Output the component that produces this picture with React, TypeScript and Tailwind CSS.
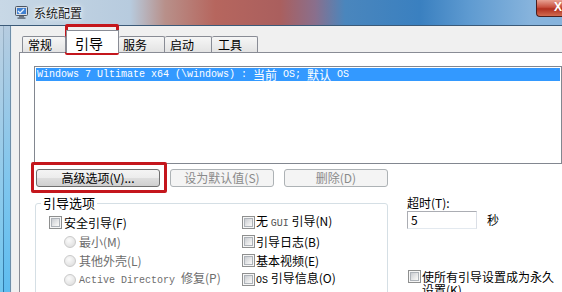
import React from "react";

function Checkbox() {
  return (
    <span className="inline-flex w-[13px] h-[13px] shrink-0 border border-[#8e8f8f] bg-[#f6f6f6] p-[1px]">
      <span className="flex-1 border border-[#aeb3b9] bg-[linear-gradient(135deg,#c9ccd1,#eeeeee_70%,#fafafa)]" />
    </span>
  );
}

function Radio() {
  return (
    <span className="inline-block w-[12px] h-[12px] shrink-0 rounded-full border border-[#cacaca] bg-[radial-gradient(circle_at_40%_35%,#fbfbfb,#e3e3e3_70%,#d8d8d8)]" />
  );
}

const mono = "font-['Liberation_Mono',monospace]";

export default function App() {
  return (
    <div className="relative w-[562px] h-[292px] overflow-hidden flex flex-col font-['Noto_Sans_CJK_SC',sans-serif] text-[12px] text-black">
      {/* Title bar */}
      <div className="h-[25px] shrink-0 flex items-center bg-[linear-gradient(90deg,#c8d8e6_0px,#b7cbde_130px,#b8908a_165px,#b6665e_215px,#aa5f5e_280px,#8a6f8c_315px,#4a86bd_345px,#3a80c0_420px,#5f9bd1_470px,#86b3dc_530px)]">
        <div className="ml-[15px] w-[13px] h-[13px] flex items-center justify-center">
          <svg width="13" height="13" viewBox="0 0 13 13">
            <rect x="0.5" y="0.5" width="12" height="9" rx="1" fill="#d9dde2" stroke="#4b5563" />
            <rect x="2" y="2" width="9" height="6" fill="#3f7fd0" />
            <path d="M3 5l2 2 4-4" stroke="#e8f3ff" strokeWidth="1.3" fill="none" />
            <rect x="4" y="10" width="5" height="1.5" fill="#6b7280" />
            <rect x="2.5" y="11.5" width="8" height="1.2" fill="#4b5563" />
          </svg>
        </div>
        <span className="ml-[6px] text-[12px] leading-[14px] text-[#1a1a1a] [text-shadow:0_0_6px_#fff,0_0_3px_#fff]">系统配置</span>
        <div className="ml-auto self-start w-[26px] h-[17px] rounded-bl-[4px] border border-t-0 border-r-0 border-[#4a1e1e] bg-[linear-gradient(#e8a193,#c7503f_45%,#b02f1f_55%,#d26b4f)] pl-[17px] text-white font-bold text-[12px] leading-[15px] font-['Liberation_Sans',sans-serif]">
          X
        </div>
      </div>
      <div className="h-px shrink-0 bg-[#3b5a78]" />

      {/* Body */}
      <div className="flex flex-1 min-h-0">
        {/* left frame */}
        <div className="w-[12px] shrink-0 flex">
          <div className="w-[3px] bg-[linear-gradient(#bcd0e2,#8fcbec_60%,#6fc6f0)]" />
          <div className="w-px bg-[linear-gradient(#9bb2c6,#2e78a8)]" />
          <div className="w-[6px] bg-[linear-gradient(#b6cce0,#7ec6ee_60%,#5ebdf0)]" />
          <div className="w-px bg-[#6f8ea8]" />
          <div className="w-px bg-[#e6edf2]" />
        </div>

        {/* content */}
        <div className="flex-1 bg-[#f0f0f0] flex flex-col pl-[7px] pt-[4px]">
          {/* tabs */}
          <div className="h-[22px] shrink-0 flex items-end pl-[3px] relative z-10">
            <div className="w-[44px] h-[16px] border border-b-0 border-[#898c95] rounded-t-[2px] bg-[linear-gradient(#f6f6f6,#e3e3e3)] pl-[5px] text-[12px] leading-[15px]">常规</div>
            <div className="w-[53px] h-[23px] -mb-px border border-b-0 border-[#898c95] bg-white pl-[8px] pt-[4px] text-[14px] leading-[16px]">引导</div>
            <div className="w-[46px] h-[16px] border border-b-0 border-l-0 border-[#898c95] rounded-t-[2px] bg-[linear-gradient(#f6f6f6,#e3e3e3)] pl-[4px] text-[12px] leading-[15px]">服务</div>
            <div className="w-[47px] h-[16px] border border-b-0 border-l-0 border-[#898c95] rounded-t-[2px] bg-[linear-gradient(#f6f6f6,#e3e3e3)] pl-[5px] text-[12px] leading-[15px]">启动</div>
            <div className="w-[46px] h-[16px] border border-b-0 border-l-0 border-[#898c95] rounded-t-[2px] bg-[linear-gradient(#f6f6f6,#e3e3e3)] pl-[6px] text-[12px] leading-[15px]">工具</div>
          </div>

          {/* panel */}
          <div className="flex-1 border-l border-t border-[#898c95] bg-white pl-[14px] pt-[13px] flex flex-col">
            {/* listbox */}
            <div className="w-[528px] h-[98px] shrink-0 border border-[#828790] p-px bg-white">
              <div className="h-[13px] bg-[#3399ff] text-white flex items-center pl-px whitespace-pre">
                <span className={`${mono} text-[10px] leading-[13px]`}>Windows 7 Ultimate x64 (\windows) : </span>
                <span className="text-[12px] leading-[13px]">当前</span>
                <span className={`${mono} text-[10px] leading-[13px]`}> OS; </span>
                <span className="text-[12px] leading-[13px]">默认</span>
                <span className={`${mono} text-[10px] leading-[13px]`}> OS</span>
              </div>
            </div>

            {/* buttons */}
            <div className="mt-[5px] ml-[2px] flex gap-[10px] shrink-0">
              <div className="w-[124px] h-[18px] rounded-[3px] border border-[#707070] bg-[linear-gradient(#f4f4f4_0%,#ececec_50%,#dedede_50%,#cfcfcf_100%)] flex items-center justify-center text-[12px] leading-[14px]">
                高级选项(V)...
              </div>
              <div className="w-[104px] h-[18px] rounded-[3px] border border-[#adb2b5] bg-[#f4f4f4] flex items-center justify-center text-[12px] leading-[14px] text-[#8a8a8a]">
                设为默认值(S)
              </div>
              <div className="w-[104px] h-[18px] rounded-[3px] border border-[#adb2b5] bg-[#f4f4f4] flex items-center justify-center text-[12px] leading-[14px] text-[#8a8a8a]">
                删除(D)
              </div>
            </div>

            {/* options row */}
            <div className="mt-[9px] flex shrink-0">
              <fieldset className="ml-px w-[353px] h-[120px] border border-[#d5dfe5] rounded-[3px] pt-[3px]">
                <legend className="ml-[5px] px-[2px] text-[13px] leading-[14px]">引导选项</legend>
                <div className="flex">
                  <div className="w-[206px] pl-[13px] flex flex-col">
                    <div className="h-[19px] flex items-center gap-[2px]">
                      <Checkbox />
                      <span className="leading-[14px]">安全引导(F)</span>
                    </div>
                    <div className="h-[19px] pl-[15px] flex items-center gap-[3px] text-[#6d6d6d]">
                      <Radio />
                      <span className="leading-[14px]">最小(M)</span>
                    </div>
                    <div className="h-[19px] pl-[15px] flex items-center gap-[3px] text-[#6d6d6d]">
                      <Radio />
                      <span className="leading-[14px]">其他外壳(L)</span>
                    </div>
                    <div className="h-[19px] pl-[15px] flex items-center gap-[3px] text-[#6d6d6d] whitespace-pre">
                      <Radio />
                      <span className="leading-[14px]"><span className={`${mono} text-[10px]`}>Active Directory </span>修复(P)</span>
                    </div>
                    <div className="h-[19px] pl-[15px] flex items-center gap-[3px] text-[#6d6d6d]">
                      <Radio />
                      <span className="leading-[14px]">网络(W)</span>
                    </div>
                  </div>
                  <div className="flex flex-col">
                    <div className="h-[19px] flex items-center gap-[1px] whitespace-pre">
                      <Checkbox />
                      <span className="leading-[14px]">无 <span className={`${mono} text-[10px] text-[#555]`}>GUI</span> 引导(N)</span>
                    </div>
                    <div className="h-[19px] flex items-center gap-[1px]">
                      <Checkbox />
                      <span className="leading-[14px]">引导日志(B)</span>
                    </div>
                    <div className="h-[19px] flex items-center gap-[1px]">
                      <Checkbox />
                      <span className="leading-[14px]">基本视频(E)</span>
                    </div>
                    <div className="h-[19px] flex items-center gap-[1px] whitespace-pre">
                      <Checkbox />
                      <span className="leading-[14px]"><span className={`${mono} text-[10px]`}>OS</span> 引导信息(O)</span>
                    </div>
                  </div>
                </div>
              </fieldset>

              <div className="ml-[19px] flex flex-col">
                <span className="leading-[14px]">超时(T):</span>
                <div className="mt-px flex items-center">
                  <div className="w-[70px] h-[18px] border border-[#abadb3] border-b-[#e3e9ef] border-r-[#dbdfe6] bg-white pl-[3px] text-[12px] leading-[16px]">5</div>
                  <span className="ml-[10px] leading-[14px]">秒</span>
                </div>
                <div className="mt-[41px] ml-px flex items-start gap-[1px]">
                  <Checkbox />
                  <span className="w-[140px] leading-[13px]">使所有引导设置成为永久设置(K)</span>
                </div>
              </div>
            </div>
          </div>
        </div>
      </div>

      {/* red annotation boxes */}
      <div className="absolute left-[65px] top-[24px] w-[54px] h-[31px] border-[3px] border-[#c4161c] rounded-[2px] pointer-events-none" />
      <div className="absolute left-[31px] top-[162px] w-[136px] h-[31px] border-[3px] border-[#c4161c] rounded-[2px] pointer-events-none" />
    </div>
  );
}
